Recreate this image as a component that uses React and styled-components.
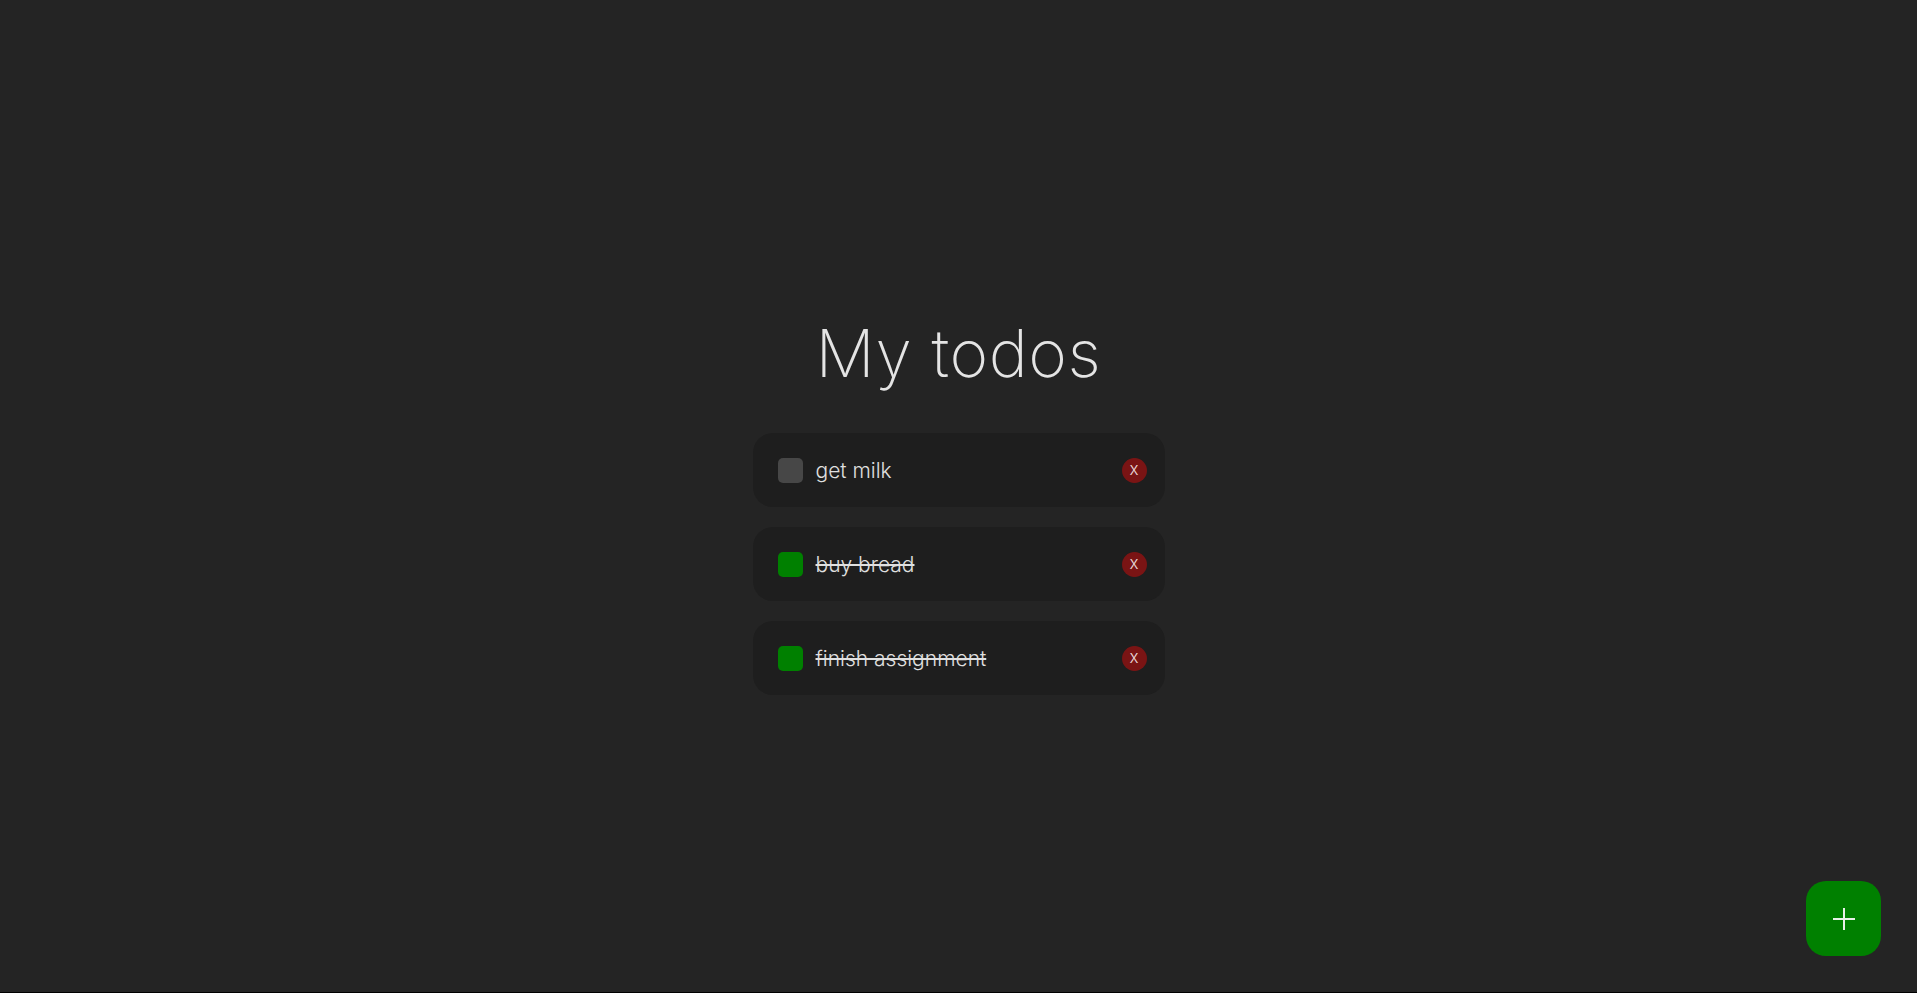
import React, { useState } from "react";
import styled, { createGlobalStyle } from "styled-components";

const Global = createGlobalStyle`
  html { background: #000; }
  body {
    margin: 0;
    background: #242424;
    font-family: Inter, "Noto Sans", sans-serif;
    font-weight: 300;
    color: #e2e2e2;
  }
  #root { min-height: 992px; }
`;

const Page = styled.main`
  min-height: 992px;
  display: flex;
  flex-direction: column;
  align-items: center;
  padding-top: 314px;
  box-sizing: border-box;
`;

const Title = styled.h1`
  margin: 0 0 41px;
  font-family: Inter, "Noto Sans", sans-serif;
  font-weight: 200;
  font-size: 66px;
  line-height: 78px;
  letter-spacing: 0.6px;
  color: #e4e4e4;
`;

const List = styled.ul`
  list-style: none;
  margin: 0;
  padding: 0;
  width: 412px;
  display: flex;
  flex-direction: column;
  gap: 20px;
`;

const Card = styled.li`
  height: 74px;
  background: #1e1e1e;
  border-radius: 20px;
  display: flex;
  align-items: center;
  padding: 0 18px 0 25px;
  box-sizing: border-box;
`;

const Check = styled.button`
  width: 25px;
  height: 25px;
  border: none;
  border-radius: 5px;
  padding: 0;
  flex: none;
  cursor: pointer;
  background: ${(p) => (p.$done ? "#008000" : "#474747")};
`;

const Label = styled.span`
  flex: 1;
  margin-left: 13px;
  font-size: 21px;
  font-weight: 300;
  color: #e0e0e0;
  text-decoration: ${(p) => (p.$done ? "line-through" : "none")};
  text-decoration-thickness: 2px;
`;

const Delete = styled.button`
  width: 25px;
  height: 25px;
  border: none;
  border-radius: 50%;
  padding: 0 0 2px;
  flex: none;
  background: #7a1414;
  color: #e8d8d8;
  font-family: Inter, sans-serif;
  font-weight: 300;
  font-size: 17px;
  line-height: 23px;
  cursor: pointer;
`;

const Fab = styled.button`
  position: fixed;
  right: 36px;
  bottom: 37px;
  width: 75px;
  height: 75px;
  border: none;
  border-radius: 20px;
  background: #008000;
  display: flex;
  align-items: center;
  justify-content: center;
  cursor: pointer;
  padding: 0;
`;

const initial = [
  { id: 1, text: "get milk", done: false },
  { id: 2, text: "buy bread", done: true },
  { id: 3, text: "finish assignment", done: true },
];

export default function App() {
  const [todos, setTodos] = useState(initial);
  const toggle = (id) =>
    setTodos((t) => t.map((x) => (x.id === id ? { ...x, done: !x.done } : x)));
  const remove = (id) => setTodos((t) => t.filter((x) => x.id !== id));
  return (
    <>
      <Global />
      <Page>
        <Title>My todos</Title>
        <List>
          {todos.map((t) => (
            <Card key={t.id}>
              <Check $done={t.done} onClick={() => toggle(t.id)} aria-label="toggle" />
              <Label $done={t.done}>{t.text}</Label>
              <Delete onClick={() => remove(t.id)}>x</Delete>
            </Card>
          ))}
        </List>
        <Fab aria-label="add">
          <svg width="26" height="26" viewBox="0 0 26 26">
            <path d="M13 2v22M2 13h22" stroke="#e8f0e8" strokeWidth="2" />
          </svg>
        </Fab>
      </Page>
    </>
  );
}
